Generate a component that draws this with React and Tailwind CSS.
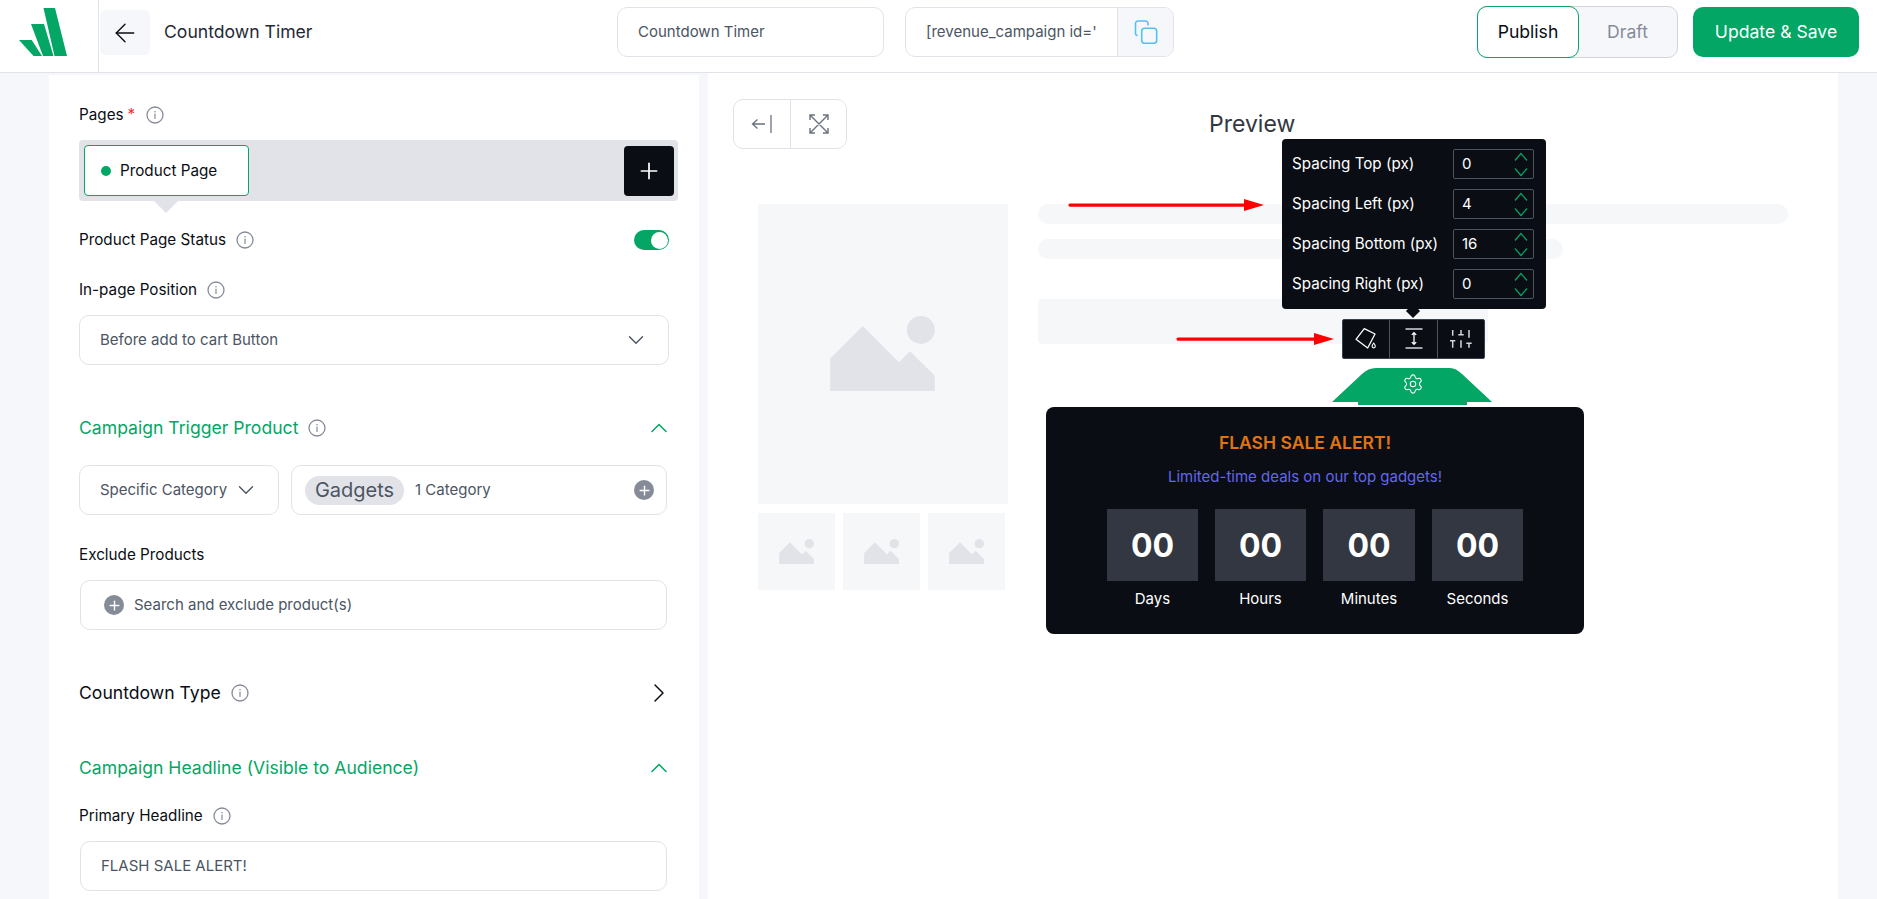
import React from "react";
import { ArrowLeft, ChevronDown, ChevronUp, ChevronRight, Plus, Settings } from "lucide-react";

function Info({ className = "" }) {
  return (
    <svg className={className} width="18" height="18" viewBox="0 0 18 18" fill="none">
      <circle cx="9" cy="9" r="8" stroke="#868b98" strokeWidth="1.300" />
      <circle cx="9" cy="5.800" r="0.800" fill="#868b98" />
      <path d="M9 8.200v4.300" stroke="#868b98" strokeWidth="1.200" strokeLinecap="round" />
    </svg>
  );
}

function Logo() {
  return (
    <svg className="mb-2" width="48" height="48" viewBox="0 0 48 48" fill="#03a665">
      <polygon points="0,32 12.700,32 23,48 14.500,48" />
      <polygon points="12,16 25,16 34.500,48 24,48" />
      <polygon points="24.500,0 36,0 48,48 35.500,48" />
    </svg>
  );
}

function Mountain({ className = "" }) {
  return (
    <svg className={className} viewBox="330 407 315 226" fill="#e2e3e8">
      <polygon points="330,535 428,437 537,546 570,513 645,587 645,633 330,633" />
      <circle cx="603" cy="449" r="42" />
    </svg>
  );
}

function PlusDot() {
  return (
    <span className="flex h-5 w-5 shrink-0 items-center justify-center rounded-full bg-[#868b98]">
      <Plus size={15} color="#fff" strokeWidth={2.2} />
    </span>
  );
}

function Field({ children, className = "" }) {
  return (
    <div className={`flex h-[50px] items-center rounded-[10px] border border-[#e2e3e8] bg-white text-[15px] text-[#4b5563] ${className}`}>
      {children}
    </div>
  );
}

function Label({ children, infoClass = "ml-[10px]", className = "" }) {
  return (
    <div className={`flex items-center text-[15.25px] leading-5 text-[#0a0d14] ${className}`}>
      <span>{children}</span>
      <Info className={infoClass} />
    </div>
  );
}

function Spacing({ label, value }) {
  return (
    <div className="flex h-[30px] items-center justify-between">
      <span className="text-[15.2px] text-white">{label}</span>
      <div className="flex h-[30px] w-[81px] items-center justify-between rounded-[2px] border border-[#4b5563] pl-2 pr-[5px]">
        <span className="text-[15px] text-white">{value}</span>
        <svg width="14" height="26" viewBox="0 0 14 26" fill="none" stroke="#03a665" strokeWidth="1.200">
          <path d="M1 9.500L7 2.500L13 9.500M1 17.500L7 24.500L13 17.500" />
        </svg>
      </div>
    </div>
  );
}

function RedArrow({ className = "", w = 196 }) {
  return (
    <svg className={className} width={w} height="14" viewBox={`0 0 ${w} 14`} fill="#ff0000">
      <path d={`M2 5.500H${w - 20}V1L${w} 7L${w - 20} 13V8.700H2a1.600 1.600 0 0 1 0-3.200z`} />
    </svg>
  );
}

function Unit({ label, className = "w-[91px]" }) {
  return (
    <div className={`flex flex-col items-center ${className}`}>
      <div className="flex h-[72px] w-full items-center justify-center bg-[#333741] pt-px text-[32px] font-bold text-white">00</div>
      <div className="mt-2 text-[15px] leading-5 text-white">{label}</div>
    </div>
  );
}

export default function App() {
  return (
    <div className="flex h-[899px] w-full flex-col overflow-hidden bg-[#f5f7fa] font-['Inter',sans-serif] text-[#0a0d14]">
      {/* Header */}
      <header className="flex h-[73px] shrink-0 items-center border-b border-[#e2e3e8] bg-white">
        <div className="flex h-full w-[99px] shrink-0 items-center border-r border-[#e2e3e8] pl-[19px]">
          <Logo />
        </div>
        <button className="mb-[7px] ml-[1px] flex h-[45px] w-[50px] items-center justify-center rounded-md bg-[#f5f7fa]">
          <ArrowLeft size={30} color="#0a0d14" strokeWidth={1.1} />
        </button>
        <h1 className="mb-[8px] ml-[14px] w-[453px] text-[17.6px] text-[#1f2937]">Countdown Timer</h1>
        <Field className="mb-[8px] w-[267px] pl-[20px]">Countdown Timer</Field>
        <div className="mb-[8px] ml-[21px] flex h-[50px] w-[269px] items-center overflow-hidden rounded-[10px] border border-[#e2e3e8] bg-white">
          <div className="flex-1 pl-[20px] text-[15px] text-[#4b5563]">[revenue_campaign id='</div>
          <div className="flex h-full w-[56px] items-center justify-center border-l border-[#e2e3e8] bg-[#f5f7fa]">
            <svg width="24" height="24" viewBox="0 0 24 24" fill="none" stroke="#56c1ef" strokeWidth="1.600">
              <rect x="7.700" y="8.300" width="15" height="15" rx="3" />
              <path d="M3 15.500A2 2 0 0 1 1.500 13.500V3.500A2.500 2.500 0 0 1 4 1H11.500A2.500 2.500 0 0 1 14 3.500V5" strokeLinecap="round" />
            </svg>
          </div>
        </div>
        <div className="mb-[8px] ml-[303px] flex h-[52px] w-[201px] rounded-[10px] border border-[#d1d5db] bg-[#f5f7fa]">
          <div className="-m-px flex h-[52px] w-[102px] items-center justify-center rounded-[10px] border border-[#03a665] bg-white text-[17.6px] text-[#0a0d14]">Publish</div>
          <div className="flex flex-1 items-center justify-center text-[17.6px] text-[#868b98]">Draft</div>
        </div>
        <button className="mb-[8px] ml-[15px] h-[50px] w-[166px] rounded-[10px] bg-[#03a665] text-[17.6px] text-white">Update &amp; Save</button>
      </header>

      <div className="flex min-h-0 flex-1 pl-[49px] pr-[39px]">
        {/* Left panel */}
        <aside className="mt-[2px] w-[650px] shrink-0 bg-white pl-[30px] pr-[21px] pt-[30px]">
          <div className="flex h-5 items-center text-[15.25px] leading-5">
            <span>Pages</span>
            <span className="ml-1 text-red-500">*</span>
            <Info className="ml-[11px]" />
          </div>
          <div className="relative mt-[15px] flex h-[61px] items-center justify-between rounded bg-[#e2e3e8] pl-[5px] pr-[4px]">
            <div className="flex h-[51px] w-[165px] items-center rounded border border-[#03a665] bg-white pl-4 text-[15.25px]">
              <span className="h-[10px] w-[10px] rounded-full bg-[#03a665]" />
              <span className="ml-[9px] mt-[1px]">Product Page</span>
            </div>
            <div className="flex h-[50px] w-[50px] items-center justify-center rounded bg-[#0a0d14]">
              <Plus size={26} color="#fff" strokeWidth={1.6} />
            </div>
            <span className="absolute left-[75px] top-full h-0 w-0 border-x-[12px] border-t-[12px] border-x-transparent border-t-[#e2e3e8]" />
          </div>
          <div className="mt-[29px] flex h-5 items-center justify-between pr-[9px]">
            <Label>Product Page Status</Label>
            <span className="flex h-5 w-[35px] items-center justify-end rounded-full bg-[#03a665] pr-[1.5px]">
              <span className="h-[17px] w-[17px] rounded-full bg-white" />
            </span>
          </div>
          <Label className="mt-[30px]">In-page Position</Label>
          <Field className="mt-[15px] w-[590px] justify-between pl-[20px] pr-[19px]">
            <span>Before add to cart Button</span>
            <ChevronDown size={26} color="#4b5563" strokeWidth={1.3} />
          </Field>

          <div className="mt-[51px] flex h-6 w-[590px] items-center justify-between">
            <div className="flex items-center text-[17.6px] text-[#03a665]">
              <span>Campaign Trigger Product</span>
              <Info className="ml-[10px]" />
            </div>
            <ChevronUp size={28} color="#03a665" strokeWidth={1.300} className="-mr-1" />
          </div>
          <div className="mt-[25px] flex w-[588px] gap-3">
            <Field className="w-[200px] shrink-0 justify-between pl-[20px] pr-[19px]">
              <span>Specific Category</span>
              <ChevronDown size={26} color="#4b5563" strokeWidth={1.3} />
            </Field>
            <Field className="flex-1 pl-[13px] pr-[12px]">
              <span className="flex h-[29px] w-[99px] items-center justify-center rounded-full bg-[#e2e3e8] text-[20px]">Gadgets</span>
              <span className="ml-[11px] flex-1">1 Category</span>
              <PlusDot />
            </Field>
          </div>
          <Label className="mt-[30px]" infoClass="hidden">Exclude Products</Label>
          <Field className="ml-px mt-[15px] w-[587px] pl-[23px]">
            <PlusDot />
            <span className="ml-[10px]">Search and exclude product(s)</span>
          </Field>

          <div className="mt-[51px] flex h-6 w-[586px] items-center justify-between">
            <div className="flex items-center text-[17.6px] text-[#0a0d14]">
              <span>Countdown Type</span>
              <Info className="ml-[10px]" />
            </div>
            <ChevronRight size={32} color="#0a0d14" strokeWidth={1.100} className="-mr-[10px]" />
          </div>
          <div className="mt-[51px] flex h-6 w-[590px] items-center justify-between">
            <span className="text-[17.6px] text-[#03a665]">Campaign Headline (Visible to Audience)</span>
            <ChevronUp size={28} color="#03a665" strokeWidth={1.300} className="-mr-1" />
          </div>
          <Label className="mt-[26px]">Primary Headline</Label>
          <Field className="ml-px mt-[15px] w-[587px] pl-5">FLASH SALE ALERT!</Field>
        </aside>

        {/* Right panel */}
        <main className="ml-[9px] flex-1 bg-white pl-[25px] pr-[50px] pt-[26px]">
          <div className="flex h-[50px] items-center">
            <div className="flex h-[50px] w-[114px] rounded-[10px] border border-[#e2e3e8]">
              <div className="flex w-[57px] items-center justify-center border-r border-[#e2e3e8]">
                <svg width="22" height="22" viewBox="0 0 22 22" fill="none" stroke="#6b7280" strokeWidth="1.300">
                  <path d="M14 11H1.500M6.500 6.500L1.500 11L6.500 15.500M20 2V20" />
                </svg>
              </div>
              <div className="flex flex-1 items-center justify-center">
                <svg width="22" height="22" viewBox="0 0 22 22" fill="none" stroke="#6b7280" strokeWidth="1.400">
                  <path d="M2 7V2h5M15 2h5v5M20 15v5h-5M7 20H2v-5M2.500 2.500l17 17M19.500 2.500l-17 17" />
                </svg>
              </div>
            </div>
            <span className="ml-[362px] text-[23px] text-[#333741]">Preview</span>
          </div>

          <div className="mt-[55px] flex pl-[25px]">
            <div className="w-[250px] shrink-0">
              <div className="flex h-[300px] items-center justify-center bg-[#f6f7f9]">
                <Mountain className="mb-px mr-px h-[75px] w-[105px]" />
              </div>
              <div className="mt-[9px] flex gap-2">
                {[0, 1, 2].map((i) => (
                  <div key={i} className="flex h-[77px] w-[77px] items-center justify-center bg-[#f6f7f9]">
                    <Mountain className="h-[25px] w-[35px]" />
                  </div>
                ))}
              </div>
            </div>

            <div className="ml-[30px] flex-1">
              <div className="h-5 w-[750px] rounded-full bg-[#f6f7f9]" />
              <div className="mt-[15px] h-5 w-[525px] rounded-full bg-[#f6f7f9]" />
              <div className="mt-10 h-[45px] w-[450px] rounded bg-[#f6f7f9]" />

              <div className="relative ml-2 mt-[63px] w-[538px] rounded-lg bg-[#0a0d14] pb-[25px] pt-[22px]">
                {/* Spacing popover */}
                <div className="absolute left-[236px] top-[-268px] flex w-[264px] flex-col gap-[10px] rounded bg-[#0a0d14] pb-[10px] pl-[10px] pr-3 pt-[10px]">
                  <Spacing label="Spacing Top (px)" value="0" />
                  <Spacing label="Spacing Left (px)" value="4" />
                  <Spacing label="Spacing Bottom (px)" value="16" />
                  <Spacing label="Spacing Right (px)" value="0" />
                  <span className="absolute left-[126px] top-full h-[10px] w-[10px] -translate-y-[3px] rotate-45 bg-[#0a0d14]" />
                </div>
                {/* Toolbar */}
                <div className="absolute left-[296px] top-[-88px] flex h-10 w-[143px] rounded-[2px] border border-[#374151] bg-[#0a0d14]">
                  <div className="flex w-[47px] items-center justify-center border-r border-[#4b5563]">
                    <svg width="24" height="24" viewBox="0 0 24 24" fill="none" stroke="#fff" strokeWidth="1.300" strokeLinejoin="round">
                      <path d="M2 12.300L10.300 1.600L21 7L13.700 21Z" />
                      <path d="M19.700 16c.9 1.200 1.600 2.200 1.600 3.300a1.600 1.600 0 0 1-3.200 0c0-1.100.7-2.100 1.600-3.300z" strokeWidth="1.100" fill="#0a0d14" />
                    </svg>
                  </div>
                  <div className="flex w-[48px] items-center justify-center border-r border-[#4b5563]">
                    <svg width="24" height="24" viewBox="0 0 24 24" fill="none" stroke="#fff" strokeWidth="1.300">
                      <path d="M3.500 2H20.500M3.500 21H20.500" stroke="#d1d5db" strokeWidth="1.600" />
                      <path d="M12 5.700V17.300M9.800 7.900L12 5.700L14.200 7.900M9.800 15.100L12 17.300L14.200 15.100" />
                    </svg>
                  </div>
                  <div className="flex flex-1 items-center justify-center">
                    <svg width="24" height="24" viewBox="0 0 24 24" fill="none" stroke="#d1d5db" strokeWidth="1.500">
                      <path d="M3.700 3V8.700M3.700 13.700V20.700M1 13.700H6.300M12 3V7.700M12 13.300V20.700M9.300 7.700H14.700M20 3V10.700M20 16.300V20.700M17.300 16.300H22.700" />
                    </svg>
                  </div>
                </div>
                {/* Settings tab */}
                <div className="absolute left-[286px] top-[-39px] h-[37px] w-[160px]">
                  <svg className="absolute inset-0" width="160" height="37" viewBox="0 0 160 37" fill="#03a665">
                    <path d="M0 34 L30 6 Q36 0 44 0 H118 Q124 0 130 6 L160 34 H135 V37 H26 V34 Z" />
                  </svg>
                  <Settings size={22} color="#fff" strokeWidth={1.200} className="absolute left-[70px] top-[5px]" />
                </div>

                <div className="pr-5 text-center">
                  <div className="text-[17.5px] font-semibold leading-7 text-[#e07411]">FLASH SALE ALERT!</div>
                  <div className="mt-[10px] text-[15px] leading-5 text-[#6366f1]">Limited-time deals on our top gadgets!</div>
                </div>
                <div className="mt-[22px] flex justify-center gap-[17px]">
                  <Unit label="Days" />
                  <Unit label="Hours" />
                  <Unit label="Minutes" className="w-[92px]" />
                  <Unit label="Seconds" />
                </div>
              </div>
            </div>
          </div>

          {/* Annotation arrows */}
          <RedArrow className="absolute left-[1068px] top-[198px]" w={196} />
          <RedArrow className="absolute left-[1176px] top-[332px]" w={158} />
        </main>
      </div>
    </div>
  );
}
